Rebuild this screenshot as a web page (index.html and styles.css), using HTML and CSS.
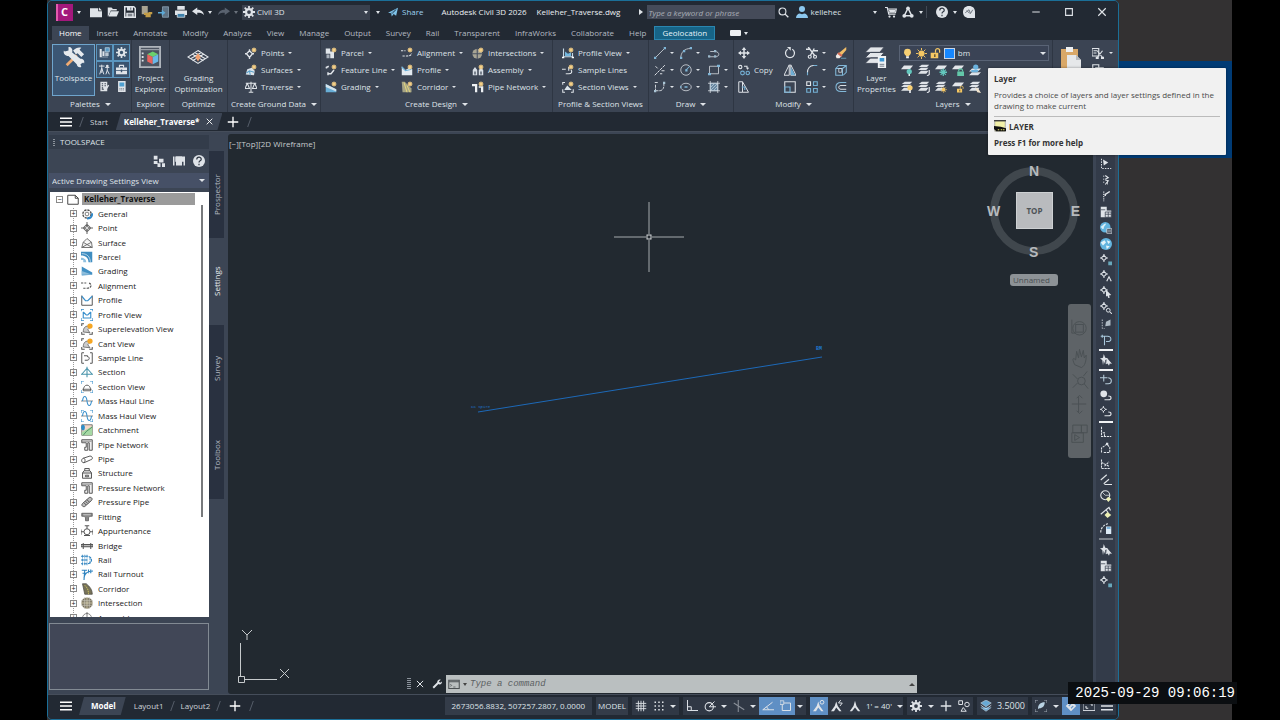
FILE: index.html
```html
<!DOCTYPE html>
<html lang="en">
<head>
<meta charset="utf-8">
<title>Autodesk Civil 3D 2026 - Kelleher_Traverse.dwg</title>
<link rel="stylesheet" href="styles.css">
</head>
<body>
<svg class="sprite" aria-hidden="true">
  <symbol id="star" viewBox="0 0 16 16"><path d="M8 0l2 4 4-2-2 4 4 2-4 2 2 4-4-2-2 4-2-4-4 2 2-4-4-2 4-2-2-4 4 2z" fill="#f4cf86"/></symbol>
  <symbol id="gear" viewBox="0 0 16 16"><circle cx="8" cy="8" r="4" fill="none" stroke="currentColor" stroke-width="3"/><path d="M8 0v3M8 13v3M0 8h3M13 8h3M2.300 2.300l2.200 2.200M11.500 11.500l2.200 2.200M2.300 13.700l2.200-2.200M11.500 4.500l2.200-2.200" stroke="currentColor" stroke-width="2.400"/></symbol>
  <symbol id="new" viewBox="0 0 16 16"><path d="M0 3h11v4h5v8H0z" fill="currentColor"/><path d="M12 2l4 4h-4z" fill="currentColor"/></symbol>
  <symbol id="open" viewBox="0 0 16 16"><path d="M1 14V2h5l2 2h5v2H5L2 13z" fill="currentColor"/><path d="M5 7h11l-3 7H2z" fill="currentColor"/></symbol>
  <symbol id="save" viewBox="0 0 16 16"><path d="M1 1h12l2 2v12H1z" fill="none" stroke="currentColor" stroke-width="2"/><path d="M4 1h8v5H4zM3 9h10v6H3z" fill="currentColor"/><path d="M5 11h6M5 13h6M9 2v3" stroke="#343b47"/></symbol>
  <symbol id="saveas" viewBox="0 0 16 16"><path d="M1 0h8v11H1z" fill="#a9a391"/><path d="M4 9h6v3H4zM10 8h5v3h-2v4H6v-3h4z" fill="#c39d47"/></symbol>
  <symbol id="import" viewBox="0 0 16 16"><path d="M6 1h8v14H6z" fill="#5e7284" stroke="#8fa7b8"/><path d="M0 8h5V5l5 4-5 4v-3H0z" fill="#5da9d6"/></symbol>
  <symbol id="print" viewBox="0 0 16 16"><path d="M3 0h10v5H3zM0 6h16v6H0z" fill="currentColor"/><path d="M3 10h10v5H3z" fill="#3d80ab" stroke="#e4e8ec"/></symbol>
  <symbol id="undo" viewBox="0 0 16 16"><path d="M0 7l7-5v3c5 0 8 2 9 7-3-3-5-3-9-3v3z" fill="currentColor"/></symbol>
  <symbol id="redo" viewBox="0 0 16 16"><path d="M16 7L9 2v3c-5 0-8 2-9 7 3-3 5-3 9-3v3z" fill="#59626f"/></symbol>
  <symbol id="plane" viewBox="0 0 16 16"><path d="M0 9L16 1l-3 13-4-3-3 4-1-5z" fill="#7fc3ea"/><path d="M5 10l8-6-6 7" fill="none" stroke="#28455c"/></symbol>
  <symbol id="search" viewBox="0 0 16 16"><circle cx="6.500" cy="6.500" r="5" fill="none" stroke="currentColor" stroke-width="1.600"/><path d="M10 10l5 5" stroke="currentColor" stroke-width="2"/></symbol>
  <symbol id="user" viewBox="0 0 16 16"><circle cx="8" cy="4" r="4" fill="#8cc7ee"/><path d="M0 16c0-4 3-6 5-6l3 1 3-1c2 0 5 2 5 6z" fill="#8cc7ee"/></symbol>
  <symbol id="cart" viewBox="0 0 16 16"><path d="M0 2h3l2 9h9M4 4h11l-1 5H5" fill="none" stroke="currentColor" stroke-width="1.600"/><path d="M5 5h9l-1 3H6z" fill="currentColor"/><circle cx="6" cy="14" r="1.500" fill="currentColor"/><circle cx="12" cy="14" r="1.500" fill="currentColor"/></symbol>
  <symbol id="apps" viewBox="0 0 16 16"><path d="M8 3L3 13h10z" fill="none" stroke="currentColor" stroke-width="2"/><circle cx="8" cy="3" r="2.500" fill="currentColor"/><circle cx="3" cy="13" r="2.500" fill="currentColor"/><circle cx="13" cy="13" r="2.500" fill="currentColor"/></symbol>
  <symbol id="help" viewBox="0 0 16 16"><circle cx="8" cy="8" r="8" fill="currentColor"/><path d="M5 6c0-4 6-4 6-.5C11 8 8 7.500 8 10M8 11.500v2" fill="none" stroke="#303844" stroke-width="1.600"/></symbol>
  <symbol id="chat" viewBox="0 0 16 16"><path d="M8 0c5 0 8 3 8 8v8H8c-5 0-8-3-8-8s3-8 8-8z" fill="currentColor"/><path d="M3 9l5-4 2 5 3-5M5 6l4 4" fill="none" stroke="#6c737d" stroke-width="1.300"/></symbol>
  <symbol id="close" viewBox="0 0 16 16"><path d="M3 3l10 10M13 3L3 13" stroke="currentColor" stroke-width="1.600"/></symbol>
  <symbol id="min" viewBox="0 0 16 16"><path d="M3 8h10" stroke="currentColor" stroke-width="1.500"/></symbol>
  <symbol id="max" viewBox="0 0 16 16"><path d="M3.500 3.500h9v9h-9z" fill="none" stroke="currentColor" stroke-width="1.500"/></symbol>
  <symbol id="plus" viewBox="0 0 16 16"><path d="M8 1v14M1 8h14" stroke="currentColor" stroke-width="1.800"/></symbol>
  <symbol id="menu" viewBox="0 0 16 16"><path d="M0 3h16M0 8h16M0 13h16" stroke="currentColor" stroke-width="1.700"/></symbol>

  <symbol id="tools" viewBox="0 0 24 24"><path d="M4 21L15 10" stroke="#f0ab72" stroke-width="3"/><path d="M11 5c3-3 6-4 9-3l-2 2 5 5-3 3-4-4-2 1z" fill="#e6eaee"/><path d="M6 1l0 4-4 1-1-1c-1 3 1 6 5 6l9 9c0 2 2 4 5 3l-1-3 3-2 1 1c1-3-1-5-4-5L10 7c1-4-1-6-4-6z" fill="#e6eaee"/></symbol>
  <symbol id="p-prospector" viewBox="0 0 16 16"><path d="M1 3h3v11h9v1H1zM5 6h3v7H5z" fill="#dfe4ea"/><path d="M9 1h6v6H9z" fill="#5a9bc6" stroke="#c7dceb"/><path d="M9 8h5v5H9z" fill="#b9c6d2"/></symbol>
  <symbol id="p-survey" viewBox="0 0 16 16"><path d="M0 3h8M4 1v5M4 6L1 15M4 6l3 9M4 6v7M9 5h6M12 6v3M12 9l-2 6M12 9l3 6" stroke="currentColor" stroke-width="1.400" fill="none"/><circle cx="12" cy="3" r="2" fill="currentColor"/></symbol>
  <symbol id="p-toolbox" viewBox="0 0 16 16"><path d="M0 5h16v4H0zM0 10h16v5H0z" fill="currentColor"/><path d="M5 5V2h6v3" fill="none" stroke="currentColor" stroke-width="1.600"/><path d="M7 8h2v4H7z" fill="#3a536e"/></symbol>
  <symbol id="p-sheet" viewBox="0 0 16 16"><path d="M2 1h10v14H2z" fill="currentColor"/><path d="M4 4h2M8 4h2M4 7h2M8 7h2M4 10h2M4 12h3" stroke="#3b4453" stroke-width="1.500"/><path d="M14 6l-5 8" stroke="currentColor" stroke-width="2"/></symbol>
  <symbol id="p-calc" viewBox="0 0 16 16"><path d="M3 0h11v16H3z" fill="currentColor"/><path d="M5 2h7v6H5z" fill="#4f9fd0"/><path d="M5 11h7M5 13h7" stroke="#59626f" stroke-dasharray="1.500 1"/></symbol>
  <symbol id="cube" viewBox="0 0 24 24"><path d="M1 1h22v22H1z" fill="#4b5360" stroke="#aeb4bb" stroke-width="2"/><path d="M2 4h20" stroke="#aeb4bb"/><path d="M4 7v2M4 11v2M4 15v2" stroke="#dde2e8" stroke-width="2"/><path d="M15 6l6 3-6 3-6-3z" fill="#6bd06c"/><path d="M9 9l6 3v8l-6-3z" fill="#e7625c"/><path d="M21 9l-6 3v8l6-3z" fill="#69b7e8"/></symbol>
  <symbol id="grade" viewBox="0 0 24 16"><path d="M12 1l11 7-11 7L1 8zM6 5l12 7M18 5L6 12M8.500 3L20 10M15.500 3L4 10" fill="none" stroke="#e2e6ea" stroke-width="1.200"/><path d="M12 4l3 4-3 5-3-5z" fill="#f0a070"/></symbol>

  <symbol id="points" viewBox="0 0 16 16"><path d="M6 5l4 4-4 5-4-5zM6 3v3M6 12v4M0 9h3M9 9h3" fill="none" stroke="currentColor" stroke-width="1.800"/><use href="#star" x="8" y="0" width="8" height="8"/></symbol>
  <symbol id="surfaces" viewBox="0 0 16 16"><path d="M1 14L3 7l6-2 4 4-1 6z" fill="#dbe3ea"/><path d="M2 12l4-3 6 2M6 9l1 6" stroke="#59a0ca" fill="none" stroke-width="1.400"/><use href="#star" x="8" y="0" width="8" height="8"/></symbol>
  <symbol id="traverse" viewBox="0 0 16 16"><path d="M1 3h14M8 1v14M5 15h6M3 3l-3 7h6L3 3M13 3l-3 7h6l-3-7" fill="none" stroke="currentColor" stroke-width="1.400"/></symbol>
  <symbol id="parcel" viewBox="0 0 16 16"><path d="M1 2h6v4h5v9H7V9H1z" fill="#e0e5ea"/><path d="M2 10h4v5H2z" fill="#a9b1bb"/><use href="#star" x="8" y="0" width="8" height="8"/></symbol>
  <symbol id="feature" viewBox="0 0 16 16"><path d="M1 5l4-2M2 4v2M4 13h4l4-5M4 11v4" fill="none" stroke="currentColor" stroke-width="2"/><use href="#star" x="8" y="0" width="8" height="8"/></symbol>
  <symbol id="grading" viewBox="0 0 16 16"><path d="M1 4l14 7v4H1z" fill="#68aed6"/><path d="M1 4v4l14 6v-3z" fill="#d4e3ec"/></symbol>
  <symbol id="grading-new" viewBox="0 0 16 16"><use href="#grading" width="16" height="16"/><use href="#star" x="8" y="0" width="8" height="8"/></symbol>
  <symbol id="align" viewBox="0 0 16 16"><path d="M0 4h7M3 11h5c7 0 7-7 1-7" fill="none" stroke="currentColor" stroke-width="1.600" stroke-dasharray="3 1.500"/></symbol>
  <symbol id="align-new" viewBox="0 0 16 16"><path d="M0 5h6M2 12h6c5 0 6-2 6-4" fill="none" stroke="currentColor" stroke-width="1.600" stroke-dasharray="3 1.500"/><use href="#star" x="8" y="0" width="8" height="8"/></symbol>
  <symbol id="profile-new" viewBox="0 0 16 16"><path d="M1 3l5 5 5-3 4 2v8H1z" fill="#e3eaf0"/><path d="M1 4l5 5 8-2" stroke="#68aed6" fill="none" stroke-width="1.500"/><use href="#star" x="8" y="0" width="8" height="8"/></symbol>
  <symbol id="corridor-new" viewBox="0 0 16 16"><path d="M1 1h4l9 9v5H2z" fill="#a6a485"/><path d="M4 2l4 13M8 6l4 9" stroke="#e4d87d" stroke-width="1.300"/><use href="#star" x="8" y="0" width="8" height="8"/></symbol>
  <symbol id="inter-new" viewBox="0 0 16 16"><circle cx="7" cy="9" r="6.500" fill="#a7a494"/><path d="M7 2v14M0 9h14" stroke="#4a5260" stroke-width="1.500"/><use href="#star" x="8" y="0" width="8" height="8"/></symbol>
  <symbol id="assembly" viewBox="0 0 16 16"><path d="M1 8l3-4 3 4v7H1zM9 8l3-3 3 3v7H9z" fill="#d9dfe6"/><path d="M3 10h2v4H3zM11 10h2v4h-2z" fill="#59626f"/><use href="#star" x="8" y="0" width="8" height="8"/></symbol>
  <symbol id="pipenet-new" viewBox="0 0 16 16"><path d="M0 4h7v11H4V7H0zM9 7h6v8h-3v-6H9z" fill="#eef1f4"/><use href="#star" x="8" y="0" width="8" height="8"/></symbol>
  <symbol id="profview-new" viewBox="0 0 16 16"><path d="M2 2v11h12V8" fill="none" stroke="#c7d9e6" stroke-width="1.500"/><path d="M4 6l4 3 4-2v5H4z" fill="#74b7dd"/><path d="M0 14h3M13 14h3" stroke="#fff" stroke-width="2"/><use href="#star" x="8" y="0" width="8" height="8"/></symbol>
  <symbol id="sample-new" viewBox="0 0 16 16"><path d="M0 7h5M5 13h4c4 0 5-3 3-5M9 4v5" fill="none" stroke="currentColor" stroke-width="1.500"/><use href="#star" x="8" y="0" width="8" height="8"/></symbol>
  <symbol id="section-new" viewBox="0 0 16 16"><path d="M1 5V2h3M1 11v4h3M12 15h3v-4" fill="none" stroke="currentColor" stroke-width="1.400"/><path d="M3 12l4-6 6 6z" fill="#dbe4eb"/><use href="#star" x="8" y="0" width="8" height="8"/></symbol>

  <symbol id="line" viewBox="0 0 16 16"><path d="M2 14L14 2" stroke="currentColor"/><path d="M0 13h3v3H0zM13 0h3v3h-3z" fill="#7fb5d6"/></symbol>
  <symbol id="arc" viewBox="0 0 16 16"><path d="M1 15C1 7 6 2 14 2" fill="none" stroke="currentColor"/><path d="M0 13h3v3H0zM4 4h3v3H4zM13 0h3v3h-3z" fill="#7fb5d6"/></symbol>
  <symbol id="pline" viewBox="0 0 16 16"><path d="M1 13h9c6 0 6-7-1-7H3" fill="none" stroke="currentColor"/><path d="M0 11h3v3H0zM8 4h3v3H8zM8 11h3v3H8z" fill="#9bb9cc"/></symbol>
  <symbol id="xline" viewBox="0 0 16 16"><path d="M1 15L15 1M2 3l3 3M10 9h5M8 13h3" fill="none" stroke="currentColor" stroke-width="1.300" stroke-dasharray="4 1"/></symbol>
  <symbol id="circle" viewBox="0 0 16 16"><circle cx="8" cy="8" r="7" fill="none" stroke="currentColor"/><path d="M8 8l5-5" stroke="#7fb5d6" stroke-width="1.400"/><path d="M7 7h3v3H7z" fill="#7fb5d6"/></symbol>
  <symbol id="rect" viewBox="0 0 16 16"><path d="M2 3h12v10H2z" fill="none" stroke="currentColor"/><path d="M0 12h4v3H0zM12 1h4v3h-4z" fill="#7fb5d6"/></symbol>
  <symbol id="poly" viewBox="0 0 16 16"><path d="M1 2h5M2 13h5c5 0 7-4 6-11M2 5v8" fill="none" stroke="currentColor" stroke-width="1.200" stroke-dasharray="4 1"/><path d="M0 12h3v3H0zM12 1h3v3h-3z" fill="#aac5d6"/></symbol>
  <symbol id="ellipse" viewBox="0 0 16 16"><ellipse cx="8" cy="8" rx="7" ry="5" fill="none" stroke="currentColor"/><path d="M6 7h4v2H6zM0 7h2v2H0z" fill="#7fb5d6"/></symbol>
  <symbol id="hatch" viewBox="0 0 16 16"><path d="M3 3h10v10H3z" fill="#6786a0" stroke="#9fbfd4"/><path d="M0 3h16M0 13h16M3 0v16M13 0v16" stroke="currentColor"/><path d="M4 8l4-4M4 12l8-8M8 12l4-4" stroke="#b9cddb"/></symbol>

  <symbol id="move" viewBox="0 0 16 16"><path d="M8 2v12M2 8h12" stroke="currentColor" stroke-width="2"/><path d="M8 0l3 4H5zM8 16l-3-4h6zM0 8l4-3v6zM16 8l-4 3V5z" fill="currentColor"/></symbol>
  <symbol id="copy" viewBox="0 0 16 16"><g fill="none" stroke-width="1.500"><circle cx="3" cy="4" r="2.200" stroke="currentColor"/><path d="M8 3h4v3M12 7l2-2" stroke="currentColor"/><circle cx="6" cy="12" r="2.500" stroke="#74b0d4"/><circle cx="13" cy="12" r="2.300" stroke="#74b0d4"/></g></symbol>
  <symbol id="stretch" viewBox="0 0 16 16"><path d="M1 1h5v14H1zM6 1l8 14H6" fill="none" stroke="currentColor" stroke-width="1.300"/><path d="M5 8h4v4" fill="none" stroke="#74b0d4" stroke-width="1.500"/></symbol>
  <symbol id="rotate" viewBox="0 0 16 16"><path d="M11 3a6 6 0 1 1-6 0" fill="none" stroke="currentColor" stroke-width="1.700"/><path d="M4 0h5v5z" fill="currentColor"/></symbol>
  <symbol id="mirror" viewBox="0 0 16 16"><path d="M7 1v14H0zM9 1v14h7z" fill="none" stroke="currentColor" stroke-width="1.300"/><path d="M9 4v11h6z" fill="#6faed4"/></symbol>
  <symbol id="scale" viewBox="0 0 16 16"><path d="M1 1h14v14H1z" fill="none" stroke="currentColor" stroke-width="1.400"/><path d="M1 8h7v7H1z" fill="none" stroke="#74b0d4" stroke-width="1.500"/></symbol>
  <symbol id="trim" viewBox="0 0 16 16"><path d="M0 3h6M3 0l9 12M11 2L6 11M10 5h6" stroke="currentColor" stroke-width="1.800"/><circle cx="5" cy="13" r="2" fill="none" stroke="currentColor" stroke-width="1.600"/><circle cx="12" cy="13" r="2" fill="none" stroke="currentColor" stroke-width="1.600"/></symbol>
  <symbol id="fillet" viewBox="0 0 16 16"><path d="M2 15V10M9 2h6" stroke="#74b0d4" stroke-width="1.500"/><path d="M2 11c0-5 3-9 8-9" fill="none" stroke="currentColor" stroke-width="1.400"/></symbol>
  <symbol id="array" viewBox="0 0 16 16"><g fill="none" stroke-width="1.500"><path d="M1 1h5v5H1z" stroke="currentColor"/><path d="M10 1h5v5h-5zM1 10h5v5H1zM10 10h5v5h-5z" stroke="#74b0d4"/></g></symbol>
  <symbol id="erase" viewBox="0 0 16 16"><path d="M15 0v4L8 12l-4-3z" fill="#f1bd67"/><path d="M4 8l5 4-3 3H2l-1-3z" fill="#f0ebe8"/><path d="M5 7l5 4-2 2-5-4z" fill="#d76d57"/><path d="M8 15h7" stroke="#74b0d4"/></symbol>
  <symbol id="explode" viewBox="0 0 16 16"><path d="M1 6h9v9H1zM1 6l4-4h10v9l-4 4M10 6l5-4" fill="none" stroke="#82b8d8" stroke-width="1.400"/><path d="M5 6h4v5H5z" fill="none" stroke="currentColor"/></symbol>
  <symbol id="offset" viewBox="0 0 16 16"><path d="M15 2H8C-1 2-1 14 8 14h7" fill="none" stroke="#82b8d8" stroke-width="1.400"/><path d="M15 6H8c-4 0-4 5 0 5h7" fill="none" stroke="currentColor" stroke-width="1.300"/></symbol>

  <symbol id="layerprops" viewBox="0 0 24 24"><path d="M6 1h15l-5 6H0zM6 7h15l-5 6H0zM6 13h15l-5 6H0z" fill="#e2e5e9" stroke="#3b4453"/><path d="M14 11h9v13h-9z" fill="#eef1f4"/><path d="M16 13h5v4h-5z" fill="#3b96d3"/><path d="M16 20h5M16 22h5" stroke="#697480"/></symbol>
  <symbol id="bulb" viewBox="0 0 16 16"><circle cx="8" cy="6" r="5" fill="#f7cf73"/><path d="M5 9h6l-1 3H6z" fill="#f7cf73"/><path d="M6 12h4v3H6z" fill="#f2f2f2"/></symbol>
  <symbol id="sun" viewBox="0 0 16 16"><circle cx="8" cy="8" r="4.500" fill="#f5c763"/><path d="M8 0v3M8 13v3M0 8h3M13 8h3M2.300 2.300l2 2M11.500 11.500l2.200 2.200M2.300 13.700l2-2M11.500 4.500l2.200-2.200" stroke="#f5c763" stroke-width="1.400"/></symbol>
  <symbol id="unlock" viewBox="0 0 16 16"><path d="M1 7h11v8H1z" fill="#f5c763"/><path d="M8 7V4c0-4 6-4 6 0v3" fill="none" stroke="#f5c763" stroke-width="1.800"/><path d="M6 9h2v4H6z" fill="#594e35"/></symbol>
  <symbol id="sheet1" viewBox="0 0 16 16"><path d="M4 2h12l-4 5H0z" fill="#e3e6ea"/></symbol>
  <symbol id="sheet3" viewBox="0 0 16 16"><path d="M5 1h10l-3 3H1zM4 5h10l-3 3H0zM4 9h10l-3 4H0z" fill="#dfe3e8"/></symbol>
  <symbol id="l-off" viewBox="0 0 16 16"><use href="#sheet1" width="16" height="16"/><circle cx="11" cy="10" r="3.500" fill="#63c7bd"/><path d="M10 13h2v3h-2z" fill="#dff5f2"/></symbol>
  <symbol id="l-iso" viewBox="0 0 16 16"><use href="#sheet3" width="16" height="16"/><path d="M15 8v6l-3 2" fill="none" stroke="#dfe3e8" stroke-width="1.600"/></symbol>
  <symbol id="l-frz" viewBox="0 0 16 16"><use href="#sheet1" width="16" height="16"/><path d="M11 6v10M6 11h10M7.500 7.500l7 7M14.500 7.500l-7 7" stroke="#63c7bd" stroke-width="1.700"/></symbol>
  <symbol id="l-lock" viewBox="0 0 16 16"><use href="#sheet1" width="16" height="16"/><path d="M7 10h9v6H7z" fill="#63c7a9"/><path d="M9 10V8c0-2 5-2 5 0v2" fill="none" stroke="#63c7a9" stroke-width="1.600"/></symbol>
  <symbol id="l-cur" viewBox="0 0 16 16"><path d="M4 6h12l-4 4H0zM4 11h12l-4 4H0z" fill="#dfe3e8"/><circle cx="9" cy="4" r="3.500" fill="#6bb2dd"/><path d="M3 8h10l-2 3H3z" fill="#6bb2dd"/></symbol>
  <symbol id="l-on" viewBox="0 0 16 16"><use href="#sheet3" width="16" height="16"/><circle cx="12" cy="9" r="3.500" fill="#f7cf73"/><path d="M11 12h2v4h-2z" fill="#fff"/></symbol>
  <symbol id="l-thaw" viewBox="0 0 16 16"><use href="#sheet3" width="16" height="16"/><use href="#sun" x="7" y="7" width="9" height="9"/></symbol>
  <symbol id="l-unlock" viewBox="0 0 16 16"><use href="#sheet1" width="16" height="16"/><use href="#unlock" x="6" y="6" width="10" height="10"/></symbol>
  <symbol id="l-match" viewBox="0 0 16 16"><use href="#sheet3" width="16" height="16"/><path d="M8 8l5 3 3 5-5-1z" fill="#f0e3cd"/></symbol>
  <symbol id="paste" viewBox="0 0 20 24"><path d="M0 3h17v21H0z" fill="#d9a868"/><path d="M5 1h7v5H5z" fill="#eef0f2"/><path d="M6 9h9l5 5v10H6z" fill="#e6e8ea"/><path d="M15 9v5h5" fill="#b9bdc2"/></symbol>
  <symbol id="cut" viewBox="0 0 16 16"><path d="M0 2h9v10H0z" fill="none" stroke="currentColor" stroke-width="1.500"/><path d="M2 5h5M2 8h4M7 5l7 9M14 5L7 14" stroke="currentColor" stroke-width="1.600"/><path d="M5 13h4v3H5zM12 13h4v3h-4z" fill="currentColor"/></symbol>
  <symbol id="copyclip" viewBox="0 0 16 16"><path d="M1 1h8v9H1zM5 5h10v10H5z" fill="#3b4453" stroke="currentColor" stroke-width="1.500"/></symbol>
  <symbol id="layercmd" viewBox="0 0 16 16"><path d="M1 1h14v14H1z" fill="#f3f1a8" stroke="#999"/><path d="M0 1h16" stroke="#222" stroke-width="1.500"/><path d="M0 8l9 1 7 2v4H3l-3-3z" fill="#111"/><path d="M5 13h2M9 13h2M12 13h2" stroke="#e9e36a" stroke-width="1.500"/></symbol>

  <symbol id="ts-tree" viewBox="0 0 16 16"><path d="M1 1h5v5H1zM1 8h5v4H1zM8 5h6v5H8zM6 11h4v5H6zM12 11h4v5h-4z" fill="currentColor"/></symbol>
  <symbol id="ts-pane" viewBox="0 0 16 16"><path d="M0 2h2v12H0zM3 2h13v12h-2V9H3z" fill="currentColor"/><path d="M4 2h8v12H4z" fill="currentColor"/></symbol>
  <symbol id="t-doc" viewBox="0 0 16 16"><path d="M1 3h10l4 4v8H1zM11 3v4h4" fill="#fff" stroke="#444" stroke-width="1.300"/></symbol>
  <symbol id="t-general" viewBox="0 0 16 16"><circle cx="8" cy="8" r="5.500" fill="none" stroke="#555" stroke-width="2" stroke-dasharray="3 1.300"/><circle cx="8" cy="8" r="2.500" fill="none" stroke="#555"/><path d="M8 14c5 0 7-3 7-7" fill="none" stroke="#2e87c8" stroke-width="2.500"/></symbol>
  <symbol id="t-point" viewBox="0 0 16 16"><path d="M8 3l5 5-5 5-5-5zM8 0v16M0 8h16" fill="none" stroke="#666" stroke-width="1.400"/><circle cx="8" cy="8" r="2" fill="#fff" stroke="#666"/></symbol>
  <symbol id="t-surface" viewBox="0 0 16 16"><path d="M1 14L3 7l5-5 6 5 1 7zM3 7l5 3 6-3M8 10l-7 4M8 10l7 4" fill="#f4f4f4" stroke="#666" stroke-width="1.200"/></symbol>
  <symbol id="t-parcel" viewBox="0 0 16 16"><path d="M0 1h15v14h-5c0-6-4-9-10-9z" fill="#3f8dc0"/><path d="M0 9c4 0 7 2 7 6H3v-3H0z" fill="#8fc0df"/><path d="M1 3.500c7 0 11 4 11.500 11" fill="none" stroke="#d8eaf5"/></symbol>
  <symbol id="t-grading" viewBox="0 0 16 16"><path d="M1 2l14 8v3L1 14z" fill="#4290c4"/><path d="M1 8l14 5H1z" fill="#8ebddb"/></symbol>
  <symbol id="t-profile" viewBox="0 0 16 16"><path d="M1 2v13h14V2" fill="none" stroke="#555" stroke-width="1.300"/><path d="M1 3l5 6h3l6-6" fill="none" stroke="#3a90cc" stroke-width="1.600"/></symbol>
  <symbol id="t-profview" viewBox="0 0 16 16"><path d="M3 4v8h10V4M3 4l4 4h2l4-4" fill="none" stroke="#3a90cc" stroke-width="1.500"/><path d="M0 3V0h4M12 0h4v3M0 12v4h4M12 16h4v-4" fill="none" stroke="#3a90cc" stroke-width="1.700"/></symbol>
  <symbol id="t-super" viewBox="0 0 16 16"><path d="M1 4V1h3M1 12v3h4M11 15h4v-3" fill="none" stroke="#555" stroke-width="1.400"/><path d="M3 12c0-5 2-8 7-8l1 3-2 2 3 4z" fill="#ccc" stroke="#555"/><circle cx="12" cy="4" r="3.500" fill="#f5a623"/></symbol>
  <symbol id="t-sample" viewBox="0 0 16 16"><path d="M4 1H1v14h3M12 1h3v14h-3M4 5h5M5 11h3c4 0 4-5 0-5" fill="none" stroke="#555" stroke-width="1.300"/></symbol>
  <symbol id="t-section" viewBox="0 0 16 16"><path d="M8 1v14M0 11h16M8 3L1 11M8 3l7 8" fill="none" stroke="#4692a9" stroke-width="1.400"/></symbol>
  <symbol id="t-secview" viewBox="0 0 16 16"><path d="M0 4V0h4M12 0h4v4M0 12v4h4M12 16h4v-4" fill="none" stroke="#3a90cc" stroke-width="1.500"/><path d="M3 13c0-10 10-10 10 0zM2 11h12" fill="none" stroke="#555" stroke-width="1.200"/></symbol>
  <symbol id="t-mass" viewBox="0 0 16 16"><path d="M0 8h16" stroke="#666"/><path d="M2 8c1-8 5-8 6 0s5 8 6 0" fill="none" stroke="#3a90cc" stroke-width="1.500"/></symbol>
  <symbol id="t-massview" viewBox="0 0 16 16"><use href="#t-mass" width="16" height="16"/><path d="M0 4V0h4M12 0h4v4M0 12v4h4M12 16h4v-4" fill="none" stroke="#3a90cc" stroke-width="1.500"/></symbol>
  <symbol id="t-catch" viewBox="0 0 16 16"><path d="M1 1h14v14H1z" fill="#f4d7c8" stroke="#555"/><path d="M1 11L15 3v12H1z" fill="#a6d9a4"/><path d="M3 15l4-5 8-6" fill="none" stroke="#3b7b55"/><path d="M0 4c2-5 6-3 5 2s-5 2-5-2z" fill="#2d8ec9"/></symbol>
  <symbol id="t-net" viewBox="0 0 16 16"><path d="M1 1h14v14h-4V5H9v10H5v-4h2V5H1z" fill="#eee" stroke="#555" stroke-width="1.300"/><path d="M1 3h13" stroke="#777"/></symbol>
  <symbol id="t-pipe" viewBox="0 0 16 16"><path d="M3 7l9-3c4 0 4 5 1 5l-9 4c-4 0-4-5-1-6zM3 7c3 0 3 4 1 6" fill="none" stroke="#555" stroke-width="1.300"/></symbol>
  <symbol id="t-struct" viewBox="0 0 16 16"><path d="M4 5h8l2 3v7H2V8zM5 5V2h6v3M2 8h12M6 11h4v2H6z" fill="#eee" stroke="#555" stroke-width="1.300"/></symbol>
  <symbol id="t-ppipe" viewBox="0 0 16 16"><path d="M2 10l9-8c3-1 5 2 3 4l-9 8c-3 1-5-2-3-4zM4 9l3 3M6 7l3 3M8 5l3 3" fill="#bbb" stroke="#555" stroke-width="1.300"/></symbol>
  <symbol id="t-fit" viewBox="0 0 16 16"><path d="M1 3h14v4h-3l-2 2v4H6V9L4 7H1z" fill="#888" stroke="#555"/><path d="M3 5h10" stroke="#ddd"/></symbol>
  <symbol id="t-app" viewBox="0 0 16 16"><circle cx="8" cy="9" r="4" fill="none" stroke="#555" stroke-width="1.300"/><path d="M8 5V1M5 1h6M0 6v7M16 6v7M0 9h4M12 9h4M4 14h8" stroke="#555" stroke-width="1.400"/></symbol>
  <symbol id="t-bridge" viewBox="0 0 16 16"><path d="M0 6h16v3H0zM3 4v8M13 4v8" fill="#bbb" stroke="#555" stroke-width="1.400"/></symbol>
  <symbol id="t-rail" viewBox="0 0 16 16"><path d="M0 3h8c8 0 8 10 0 10H0M0 8h8" fill="none" stroke="#2e83bf" stroke-width="1.500" stroke-dasharray="4 1"/><path d="M2 1v14M5 1v14M8 1v14M12 4v9" stroke="#2e83bf" stroke-dasharray="4 1"/></symbol>
  <symbol id="t-turn" viewBox="0 0 16 16"><path d="M4 16L5 3M4 13c1-6 4-9 12-9M1 3h7M2 7h5M10 2v5M13 2v5" fill="none" stroke="#2e83bf" stroke-width="1.500"/></symbol>
  <symbol id="t-corr" viewBox="0 0 16 16"><path d="M2 1h5c5 4 8 8 8 14H5z" fill="#777258" stroke="#4f4e47"/><path d="M5 3c4 4 5 7 5 12" stroke="#e4d860" stroke-dasharray="2 1" fill="none"/></symbol>
  <symbol id="t-inter" viewBox="0 0 16 16"><circle cx="8" cy="8" r="7.500" fill="#77705c"/><path d="M8 0v16M0 8h16" stroke="#e9e3c6"/><path d="M5 0v16M11 0v16M0 5h16M0 11h16" stroke="#c8c6bc"/></symbol>
  <symbol id="t-asm" viewBox="0 0 16 16"><circle cx="8" cy="8" r="6" fill="none" stroke="#666"/><path d="M8 0v16" stroke="#555"/></symbol>

  <symbol id="r-tri" viewBox="0 0 16 16"><path d="M2 1v13h13" fill="none" stroke="currentColor" stroke-dasharray="2 1.500" stroke-width="1.300"/><path d="M4 2l7 4-6 4z" fill="currentColor"/></symbol>
  <symbol id="r-person" viewBox="0 0 16 16"><path d="M5 2v2M5 6v2M5 10v2M10 9v5" stroke="currentColor"/><path d="M7 2l4 3-4 2M7 8l4 1-4 5" fill="none" stroke="currentColor" stroke-width="1.500"/></symbol>
  <symbol id="r-flag" viewBox="0 0 16 16"><path d="M5 2v13" stroke="currentColor" stroke-dasharray="1.500 1.500" stroke-width="1.500"/><path d="M13 2L7 6v2" fill="none" stroke="currentColor" stroke-width="2"/></symbol>
  <symbol id="r-table" viewBox="0 0 16 16"><path d="M1 1h8v5h6v9H1z" fill="currentColor"/><path d="M7 8h8v7H7zM7 11h8M11 8v7M1 5h6" fill="none" stroke="#3b4453"/></symbol>
  <symbol id="r-globe" viewBox="0 0 16 16"><circle cx="7" cy="7" r="7" fill="#63b4df"/><path d="M1 6c3 0 3-4 7-4 0 3-3 3-3 6S2 9 1 6z" fill="#d7eef7"/><path d="M9 9h7v6H9z" fill="#3b4453" stroke="#dfe4ea"/><path d="M10 12h5" stroke="#dfe4ea"/></symbol>
  <symbol id="r-globe2" viewBox="0 0 16 16"><circle cx="8" cy="8" r="8" fill="#63b4df"/><path d="M1 6l5-3 2 3-4 4zM9 3l5 2-3 3zM8 10l5 1-4 4z" fill="#e1f3fa"/></symbol>
  <symbol id="r-node" viewBox="0 0 16 16"><path d="M6 2l4 4-4 4-4-4zM6 0v3M6 9v3M0 6h3M9 6h3" fill="none" stroke="currentColor" stroke-width="1.700"/></symbol>
  <symbol id="r-ndot" viewBox="0 0 16 16"><use href="#r-node" width="14" height="14"/><path d="M11 10h5v5h-5z" fill="#68a7ba"/></symbol>
  <symbol id="r-ntext" viewBox="0 0 16 16"><use href="#r-node" width="14" height="14"/><path d="M9 15l3-6 3 6" fill="none" stroke="currentColor" stroke-width="1.500"/></symbol>
  <symbol id="r-narrow" viewBox="0 0 16 16"><use href="#r-node" width="14" height="14"/><path d="M8 5l7 7-3 .5 1 3-2 .5-1-3-2 1z" fill="currentColor"/></symbol>
  <symbol id="r-nzoom" viewBox="0 0 16 16"><use href="#r-node" width="14" height="14"/><circle cx="11" cy="11" r="2.500" fill="none" stroke="currentColor" stroke-width="1.300"/><path d="M13 13l3 3" stroke="currentColor" stroke-width="1.400"/></symbol>
  <symbol id="r-edit" viewBox="0 0 16 16"><path d="M3 2v12h3" stroke="currentColor" stroke-dasharray="2 1.500" fill="none"/><path d="M14 2v8L7 11l1-6z" fill="#aeb9c3"/></symbol>
  <symbol id="r-turn" viewBox="0 0 16 16"><path d="M1 3h9c6 0 6 7 0 7H8M6 3v12M3 1v4" fill="none" stroke="#a9c8dc" stroke-width="1.400"/></symbol>
  <symbol id="r-star" viewBox="0 0 16 16"><path d="M5 0l2 5 4 1-4 2v6l-2-5-1 6-1-7-3-2 4-1zM9 5l7 8-3-.5-1 3-2-3-2 1z" fill="currentColor"/></symbol>
  <symbol id="r-nturn" viewBox="0 0 16 16"><use href="#r-node" width="12" height="12"/><path d="M6 13h5c5 0 5-5 0-5" fill="none" stroke="currentColor" stroke-width="1.400"/></symbol>
  <symbol id="r-curve" viewBox="0 0 16 16"><path d="M0 5h10M5 1v9M7 13h4c5 0 6-7 0-8" fill="none" stroke="#b5cbd9" stroke-width="1.400"/></symbol>
  <symbol id="r-blob" viewBox="0 0 16 16"><circle cx="5" cy="5" r="4.500" fill="currentColor"/><path d="M6 13h5c5 0 5-5 0-5" fill="none" stroke="currentColor" stroke-width="1.400"/></symbol>
  <symbol id="r-l1" viewBox="0 0 16 16"><path d="M2 1v13h13M6 14V9H2" fill="none" stroke="currentColor" stroke-dasharray="3 1" stroke-width="1.400"/></symbol>
  <symbol id="r-l2" viewBox="0 0 16 16"><path d="M2 14V8l7-5 4 4v7H4" fill="none" stroke="currentColor" stroke-dasharray="3 1" stroke-width="1.400"/><path d="M8 1h3v3H8z" fill="currentColor"/></symbol>
  <symbol id="r-l3" viewBox="0 0 16 16"><path d="M2 2v12h12M2 6l10 5M6 11l6-6" fill="none" stroke="currentColor" stroke-dasharray="3 1" stroke-width="1.400"/></symbol>
  <symbol id="r-l4" viewBox="0 0 16 16"><path d="M1 8l8-7M5 13l7-6M6 14h10" fill="none" stroke="currentColor" stroke-width="1.500"/></symbol>
  <symbol id="r-cir" viewBox="0 0 16 16"><circle cx="7" cy="7" r="6" fill="none" stroke="currentColor" stroke-width="1.500"/><path d="M7 7L3 3M7 7h6" stroke="currentColor"/><path d="M11 9l4 3-4 4-3-4z" fill="#ecefb4"/></symbol>
  <symbol id="r-dia" viewBox="0 0 16 16"><path d="M1 11l7-6 3 4M8 5l4-3 2 4" fill="none" stroke="currentColor" stroke-width="1.600"/><path d="M10 8l5 4-5 4-4-4z" fill="#ecefb4"/></symbol>
  <symbol id="r-calc" viewBox="0 0 16 16"><path d="M1 14C1 8 5 3 12 2" fill="none" stroke="currentColor" stroke-dasharray="3 1.500" stroke-width="1.500"/><path d="M8 6h7v10H8z" fill="#dceaf6"/><path d="M9 8h5" stroke="#5d9fd2" stroke-width="2"/></symbol>

  <symbol id="s-grid" viewBox="0 0 16 16"><path d="M4.500 1v14M11.500 1v14M1 4.500h14M1 11.500h14M8 1v14M1 8h14" stroke="currentColor" stroke-width="1.200"/></symbol>
  <symbol id="s-snap" viewBox="0 0 16 16"><path d="M2 3h13M2 8h13M2 13h13" stroke="currentColor" stroke-width="2" stroke-dasharray="2 3"/></symbol>
  <symbol id="s-ortho" viewBox="0 0 16 16"><path d="M2 0v14h14M2 9h5v5" fill="none" stroke="currentColor" stroke-width="1.300"/></symbol>
  <symbol id="s-polar" viewBox="0 0 16 16"><circle cx="7" cy="9" r="5.500" fill="none" stroke="currentColor" stroke-width="1.400"/><path d="M7 9h9M7 9l7-7" stroke="currentColor" stroke-width="1.300"/></symbol>
  <symbol id="s-iso" viewBox="0 0 16 16"><path d="M7 0v16M1 4l14 9" stroke="#8a9099" stroke-width="1.400"/></symbol>
  <symbol id="s-track" viewBox="0 0 16 16"><path d="M1 13h15M1 13L14 3M6 9l3 4" fill="none" stroke="currentColor" stroke-width="1.300"/></symbol>
  <symbol id="s-osnap" viewBox="0 0 16 16"><path d="M3 4h11v10H3z" fill="none" stroke="currentColor" stroke-width="1.300"/><path d="M0 1h5v5H0z" fill="#6b98c8" stroke="currentColor"/></symbol>
  <symbol id="s-anno" viewBox="0 0 16 16"><path d="M8 1l2 7 5 7H12L8 10l-4 5H1l5-7z" fill="currentColor"/></symbol>
  <symbol id="s-anno2" viewBox="0 0 16 16"><path d="M7 2l2 6 5 7H11L7 10l-3 5H0l5-7z" fill="currentColor"/><circle cx="12" cy="3" r="2.500" fill="none" stroke="currentColor" stroke-width="1.300"/></symbol>
  <symbol id="s-anno3" viewBox="0 0 16 16"><path d="M7 2l2 6 5 7H11L7 10l-3 5H0l5-7z" fill="currentColor"/><path d="M13 0l-3 4h5l-3 4" fill="none" stroke="currentColor" stroke-width="1.300"/></symbol>
  <symbol id="s-shapes" viewBox="0 0 16 16"><path d="M1 1h5v5H1zM7 10l4 5H4z" fill="none" stroke="currentColor" stroke-width="1.300"/><circle cx="12" cy="6" r="3" fill="none" stroke="currentColor" stroke-width="1.300"/></symbol>
  <symbol id="s-layers" viewBox="0 0 16 16"><path d="M1 10l7 5 7-5M1 4l7 5 7-5-7-4z" fill="#68a9d5" stroke="#aebbc7"/><path d="M1 7l7 5 7-5" fill="none" stroke="#dfe6ed"/></symbol>
  <symbol id="s-leaf" viewBox="0 0 16 16"><path d="M0 4V0h4M12 0h4v4M0 12v4h4M12 16h4v-4" fill="none" stroke="#aab2bc" stroke-width="1.200"/><path d="M4 12c0-6 3-9 9-9 0 5-3 8-7 8z" fill="#b9d2e2"/></symbol>
  <symbol id="s-dia" viewBox="0 0 16 16"><path d="M8 1l7 7-7 7-7-7z" fill="currentColor"/><path d="M5 8l3-3M8 11l3-3" stroke="#6796c8" stroke-width="1.500"/></symbol>
  <symbol id="s-full" viewBox="0 0 16 16"><path d="M0 2h16v12H0z" fill="none" stroke="currentColor" stroke-width="1.200"/><path d="M4 11V8M4 11h3M12 5H9M12 5v3" stroke="currentColor" stroke-width="1.500"/></symbol>
  <symbol id="wrench" viewBox="0 0 16 16"><path d="M2 14l8-8" stroke="currentColor" stroke-width="3"/><path d="M9 7c-2-4 2-7 5-6l-3 3 2 2 3-2c0 4-3 6-6 4z" fill="currentColor"/></symbol>
  <symbol id="prompt" viewBox="0 0 16 16"><path d="M1 3h14v11H1zM1 5h14" fill="none" stroke="#4b5053" stroke-width="1.400"/><path d="M3 8l2 2-2 1M7 12h3" fill="none" stroke="#4b5053"/></symbol>
</svg>

<div class="desktop">
  <div class="backdrop"></div>
  <main class="app">
    <header class="titlebar">
      <button class="logo" aria-label="Application menu">C</button><i class="caret"></i>
      <div class="quick">
        <button aria-label="New"><svg><use href="#new"/></svg></button>
        <button aria-label="Open"><svg><use href="#open"/></svg></button>
        <button aria-label="Save"><svg><use href="#save"/></svg></button>
        <button aria-label="Save as"><svg><use href="#saveas"/></svg></button>
        <button aria-label="Import"><svg><use href="#import"/></svg></button>
        <button aria-label="Plot"><svg><use href="#print"/></svg></button>
        <button class="split" aria-label="Undo"><svg><use href="#undo"/></svg><i class="caret"></i></button>
        <button class="split" aria-label="Redo"><svg><use href="#redo"/></svg><i class="caret dim"></i></button>
      </div>
      <label class="workspace"><svg><use href="#gear"/></svg><select aria-label="Workspace"><option>Civil 3D</option></select><i class="caret"></i></label>
      <i class="caret more"></i>
      <button class="share"><svg><use href="#plane"/></svg>Share</button>
      <h1 class="title"><span>Autodesk Civil 3D 2026</span><span>Kelleher_Traverse.dwg</span></h1>
      <i class="caret right"></i>
      <input class="search" type="search" aria-label="Search help" placeholder="Type a keyword or phrase">
      <button class="find" aria-label="Search"><svg><use href="#search"/></svg></button>
      <button class="account"><svg><use href="#user"/></svg>kellehec<i class="caret"></i></button>
      <div class="services">
        <button aria-label="Store"><svg><use href="#cart"/></svg></button>
        <button class="split" aria-label="Apps"><svg><use href="#apps"/></svg><i class="caret"></i></button>
        <button class="split helpbtn" aria-label="Help"><svg><use href="#help"/></svg><i class="caret"></i></button>
        <button aria-label="Feedback"><svg><use href="#chat"/></svg></button>
      </div>
      <div class="wincontrols">
        <button aria-label="Minimize"><svg><use href="#min"/></svg></button>
        <button aria-label="Maximize"><svg><use href="#max"/></svg></button>
        <button aria-label="Close"><svg><use href="#close"/></svg></button>
      </div>
    </header>

    <nav class="ribbon-tabs" aria-label="Ribbon tabs">
      <button class="active">Home</button><button>Insert</button><button>Annotate</button><button>Modify</button><button>Analyze</button><button>View</button><button>Manage</button><button>Output</button><button>Survey</button><button>Rail</button><button>Transparent</button><button>InfraWorks</button><button>Collaborate</button><button>Help</button><button class="geo">Geolocation</button>
      <button class="collapse" aria-label="Minimize ribbon"><span class="pill"></span><i class="caret"></i></button>
    </nav>

    <section class="ribbon">
      <div class="panel">
        <div class="panel-body palettes">
          <button class="big on"><svg><use href="#tools"/></svg>Toolspace</button>
          <div class="mini">
            <button class="on" aria-label="Prospector"><svg><use href="#p-prospector"/></svg></button>
            <button class="on" aria-label="Settings"><svg><use href="#gear"/></svg></button>
            <button class="on" aria-label="Survey"><svg><use href="#p-survey"/></svg></button>
            <button class="on" aria-label="Toolbox"><svg><use href="#p-toolbox"/></svg></button>
            <button aria-label="Properties"><svg><use href="#p-sheet"/></svg></button>
            <button aria-label="Calculator"><svg><use href="#p-calc"/></svg></button>
          </div>
        </div>
        <h2>Palettes<i class="caret"></i></h2>
      </div>
      <div class="panel">
        <div class="panel-body center"><button class="big"><svg><use href="#cube"/></svg>Project<br>Explorer</button></div>
        <h2>Explore</h2>
      </div>
      <div class="panel">
        <div class="panel-body center"><button class="big"><svg><use href="#grade"/></svg>Grading<br>Optimization</button></div>
        <h2>Optimize</h2>
      </div>
      <div class="panel">
        <div class="panel-body cmds ground">
          <button><svg><use href="#points"/></svg>Points<i class="caret"></i></button>
          <button><svg><use href="#surfaces"/></svg>Surfaces<i class="caret"></i></button>
          <button><svg><use href="#traverse"/></svg>Traverse<i class="caret"></i></button>
        </div>
        <h2>Create Ground Data<i class="caret"></i></h2>
      </div>
      <div class="panel">
        <div class="panel-body cmds design">
          <button><svg><use href="#parcel"/></svg>Parcel<i class="caret"></i></button>
          <button><svg><use href="#feature"/></svg>Feature Line<i class="caret"></i></button>
          <button><svg><use href="#grading-new"/></svg>Grading<i class="caret"></i></button>
          <button><svg><use href="#align-new"/></svg>Alignment<i class="caret"></i></button>
          <button><svg><use href="#profile-new"/></svg>Profile<i class="caret"></i></button>
          <button><svg><use href="#corridor-new"/></svg>Corridor<i class="caret"></i></button>
          <button><svg><use href="#inter-new"/></svg>Intersections<i class="caret"></i></button>
          <button><svg><use href="#assembly"/></svg>Assembly<i class="caret"></i></button>
          <button><svg><use href="#pipenet-new"/></svg>Pipe Network<i class="caret"></i></button>
        </div>
        <h2>Create Design<i class="caret"></i></h2>
      </div>
      <div class="panel">
        <div class="panel-body cmds views">
          <button><svg><use href="#profview-new"/></svg>Profile View<i class="caret"></i></button>
          <button><svg><use href="#sample-new"/></svg>Sample Lines</button>
          <button><svg><use href="#section-new"/></svg>Section Views<i class="caret"></i></button>
        </div>
        <h2>Profile &amp; Section Views</h2>
      </div>
      <div class="panel">
        <div class="panel-body cmds draw">
          <button aria-label="Line"><svg><use href="#line"/></svg><i class="caret"></i></button>
          <button aria-label="Construction line"><svg><use href="#xline"/></svg><i class="caret"></i></button>
          <button aria-label="Polyline"><svg><use href="#poly"/></svg><i class="caret"></i></button>
          <button aria-label="Arc"><svg><use href="#arc"/></svg><i class="caret"></i></button>
          <button aria-label="Circle"><svg><use href="#circle"/></svg><i class="caret"></i></button>
          <button aria-label="Ellipse"><svg><use href="#ellipse"/></svg><i class="caret"></i></button>
          <button aria-label="3D polyline"><svg><use href="#pline"/></svg></button>
          <button aria-label="Rectangle"><svg><use href="#rect"/></svg><i class="caret"></i></button>
          <button aria-label="Hatch"><svg><use href="#hatch"/></svg><i class="caret"></i></button>
        </div>
        <h2>Draw<i class="caret"></i></h2>
      </div>
      <div class="panel">
        <div class="panel-body cmds modify">
          <button aria-label="Move"><svg><use href="#move"/></svg></button>
          <button><svg><use href="#copy"/></svg>Copy</button>
          <button aria-label="Stretch"><svg><use href="#stretch"/></svg></button>
          <button aria-label="Rotate"><svg><use href="#rotate"/></svg></button>
          <button aria-label="Mirror"><svg><use href="#mirror"/></svg></button>
          <button aria-label="Scale"><svg><use href="#scale"/></svg></button>
          <button aria-label="Trim"><svg><use href="#trim"/></svg><i class="caret"></i></button>
          <button aria-label="Fillet"><svg><use href="#fillet"/></svg><i class="caret"></i></button>
          <button aria-label="Array"><svg><use href="#array"/></svg><i class="caret"></i></button>
          <button aria-label="Erase"><svg><use href="#erase"/></svg></button>
          <button aria-label="Explode"><svg><use href="#explode"/></svg></button>
          <button aria-label="Offset"><svg><use href="#offset"/></svg></button>
        </div>
        <h2>Modify<i class="caret"></i></h2>
      </div>
      <div class="panel">
        <div class="panel-body layers">
          <button class="big"><svg><use href="#layerprops"/></svg>Layer<br>Properties</button>
          <div class="layer-tools">
            <label class="layer-combo"><svg><use href="#bulb"/></svg><svg><use href="#sun"/></svg><svg><use href="#unlock"/></svg><span class="swatch"></span><select aria-label="Layer"><option>bm</option></select><i class="caret"></i></label>
            <div class="layer-icons">
              <button aria-label="Off"><svg><use href="#l-off"/></svg></button>
              <button aria-label="Isolate"><svg><use href="#l-iso"/></svg></button>
              <button aria-label="Freeze"><svg><use href="#l-frz"/></svg></button>
              <button aria-label="Lock"><svg><use href="#l-lock"/></svg></button>
              <button aria-label="Make current"><svg><use href="#l-cur"/></svg></button>
              <button aria-label="Turn all on"><svg><use href="#l-on"/></svg></button>
              <button aria-label="Unisolate"><svg><use href="#l-iso"/></svg></button>
              <button aria-label="Thaw"><svg><use href="#l-thaw"/></svg></button>
              <button aria-label="Unlock"><svg><use href="#l-unlock"/></svg></button>
              <button aria-label="Match"><svg><use href="#l-match"/></svg></button>
            </div>
          </div>
        </div>
        <h2>Layers<i class="caret"></i></h2>
      </div>
      <div class="panel">
        <div class="panel-body clip">
          <button class="big" aria-label="Paste"><svg><use href="#paste"/></svg></button>
          <div class="clip-side">
            <button aria-label="Cut"><svg><use href="#cut"/></svg><i class="caret"></i></button>
            <button aria-label="Copy clip"><svg><use href="#copyclip"/></svg></button>
          </div>
        </div>
      </div>
    </section>

    <nav class="doc-tabs" aria-label="Drawings">
      <button class="burger" aria-label="Drawing list"><svg><use href="#menu"/></svg></button>
      <i class="slash"></i>
      <button>Start</button>
      <button class="active">Kelleher_Traverse*<svg><use href="#close"/></svg></button>
      <button class="add" aria-label="New drawing"><svg><use href="#plus"/></svg></button>
      <i class="slash"></i>
    </nav>

    <div class="workarea">
      <aside class="toolspace">
        <div class="ts-main">
          <h2><i class="grip"></i>TOOLSPACE</h2>
          <div class="ts-tools">
            <button aria-label="Show tree"><svg><use href="#ts-tree"/></svg></button>
            <button aria-label="Preview"><svg><use href="#ts-pane"/></svg></button>
            <button aria-label="Help"><svg><use href="#help"/></svg></button>
          </div>
          <label class="ts-view"><select aria-label="Settings view"><option>Active Drawing Settings View</option></select><i class="caret"></i></label>
          <div class="tree-box">
            <ul class="tree">
              <li class="root"><button aria-label="Collapse">−</button><svg><use href="#t-doc"/></svg><span>Kelleher_Traverse</span></li>
              <li><button aria-label="Expand">+</button><svg><use href="#t-general"/></svg>General</li>
              <li><button aria-label="Expand">+</button><svg><use href="#t-point"/></svg>Point</li>
              <li><button aria-label="Expand">+</button><svg><use href="#t-surface"/></svg>Surface</li>
              <li><button aria-label="Expand">+</button><svg><use href="#t-parcel"/></svg>Parcel</li>
              <li><button aria-label="Expand">+</button><svg><use href="#t-grading"/></svg>Grading</li>
              <li><button aria-label="Expand">+</button><svg class="dark"><use href="#align"/></svg>Alignment</li>
              <li><button aria-label="Expand">+</button><svg><use href="#t-profile"/></svg>Profile</li>
              <li><button aria-label="Expand">+</button><svg><use href="#t-profview"/></svg>Profile View</li>
              <li><button aria-label="Expand">+</button><svg><use href="#t-super"/></svg>Superelevation View</li>
              <li><button aria-label="Expand">+</button><svg><use href="#t-super"/></svg>Cant View</li>
              <li><button aria-label="Expand">+</button><svg><use href="#t-sample"/></svg>Sample Line</li>
              <li><button aria-label="Expand">+</button><svg><use href="#t-section"/></svg>Section</li>
              <li><button aria-label="Expand">+</button><svg><use href="#t-secview"/></svg>Section View</li>
              <li><button aria-label="Expand">+</button><svg><use href="#t-mass"/></svg>Mass Haul Line</li>
              <li><button aria-label="Expand">+</button><svg><use href="#t-massview"/></svg>Mass Haul View</li>
              <li><button aria-label="Expand">+</button><svg><use href="#t-catch"/></svg>Catchment</li>
              <li><button aria-label="Expand">+</button><svg><use href="#t-net"/></svg>Pipe Network</li>
              <li><button aria-label="Expand">+</button><svg><use href="#t-pipe"/></svg>Pipe</li>
              <li><button aria-label="Expand">+</button><svg><use href="#t-struct"/></svg>Structure</li>
              <li><button aria-label="Expand">+</button><svg><use href="#t-net"/></svg>Pressure Network</li>
              <li><button aria-label="Expand">+</button><svg><use href="#t-ppipe"/></svg>Pressure Pipe</li>
              <li><button aria-label="Expand">+</button><svg><use href="#t-fit"/></svg>Fitting</li>
              <li><button aria-label="Expand">+</button><svg><use href="#t-app"/></svg>Appurtenance</li>
              <li><button aria-label="Expand">+</button><svg><use href="#t-bridge"/></svg>Bridge</li>
              <li><button aria-label="Expand">+</button><svg><use href="#t-rail"/></svg>Rail</li>
              <li><button aria-label="Expand">+</button><svg><use href="#t-turn"/></svg>Rail Turnout</li>
              <li><button aria-label="Expand">+</button><svg><use href="#t-corr"/></svg>Corridor</li>
              <li><button aria-label="Expand">+</button><svg><use href="#t-inter"/></svg>Intersection</li>
              <li><button aria-label="Expand">+</button><svg><use href="#t-asm"/></svg>Assembly</li>
            </ul>
            <div class="scroll"><i></i></div>
          </div>
          <div class="preview"></div>
        </div>
        <nav class="side-tabs" aria-label="Toolspace tabs">
          <button>Prospector</button><button class="active">Settings</button><button>Survey</button><button>Toolbox</button>
        </nav>
      </aside>

      <section class="canvas">
        <div class="vp-label">[−][Top][2D Wireframe]</div>
        <svg class="drawing" viewBox="0 0 865 558" preserveAspectRatio="xMinYMin meet">
          <path d="M250 278L594 223" stroke="#1d69b8"/>
          <text x="243" y="274">CC Spire</text>
          <text x="588" y="216" class="bm">BM</text>
          <path d="M386 103h32M424 103h32M421 68v32M421 106v32" stroke="#a5abad"/>
          <rect x="419" y="101" width="4" height="4" fill="none" stroke="#d7dbdc"/>
          <path d="M12.500 509v33M16 545.500h33M10.500 542.500h6v6h-6z" stroke="#c6cacc" fill="none"/>
          <path d="M14 496l5 5 5-5M19 501v5M52 535l9 9M61 535l-9 9" stroke="#c6cacc" fill="none"/>
        </svg>
        <div class="cube">
          <svg viewBox="0 0 96 96"><circle cx="48" cy="48" r="40" fill="none" stroke="#40474d" stroke-width="8"/></svg>
          <b class="n">N</b><b class="w">W</b><b class="e">E</b><b class="s">S</b>
          <button>TOP</button>
        </div>
        <button class="ucs">Unnamed</button>
        <div class="navbar">
          <svg viewBox="0 0 24 154"><g fill="none" stroke="#4a5054" stroke-width="1"><circle cx="12" cy="22" r="7"/><rect x="8" y="18" width="8" height="8"/><path d="M4 13v14h4M7 60c-3-6-2-8 1-5l1-9 2 7 1-9 2 8 2-7 1 8 2-3c0 6-1 11-5 13z"/><circle cx="14" cy="77" r="4"/><path d="M17 80l4 5M5 70l5 5M5 84l5-5M20 67l-4 5M11 93v17M4 101h15M9 95l3-3 3 3M9 108l3 3 3-3M5 123h9v8H5zM14 123h6v8h-6zM4 131h12v10H4zM7 133l5 3-5 3z"/></g></svg>
        </div>
        <div class="command">
          <i class="grip"></i>
          <button aria-label="Close"><svg><use href="#close"/></svg></button>
          <button aria-label="Customize"><svg><use href="#wrench"/></svg></button>
          <label class="cmdline"><svg><use href="#prompt"/></svg><i class="caret"></i><input type="text" aria-label="Command" placeholder="Type a command"><i class="caret up"></i></label>
        </div>
      </section>

      <div class="toolbar" role="toolbar" aria-label="Points and geodesy">
        <button aria-label="Angle"><svg><use href="#r-tri"/></svg></button>
        <button aria-label="Station"><svg><use href="#r-person"/></svg></button>
        <button aria-label="Offset"><svg><use href="#r-flag"/></svg></button>
        <button aria-label="Grid"><svg><use href="#r-table"/></svg></button>
        <button aria-label="Zone"><svg><use href="#r-globe"/></svg></button>
        <button aria-label="Latitude longitude"><svg><use href="#r-globe2"/></svg></button>
        <button aria-label="Point number"><svg><use href="#r-ndot"/></svg></button>
        <button aria-label="Point name"><svg><use href="#r-ntext"/></svg></button>
        <button aria-label="Point object"><svg><use href="#r-narrow"/></svg></button>
        <button aria-label="Zoom to point"><svg><use href="#r-nzoom"/></svg></button>
        <button aria-label="Side shot"><svg><use href="#r-edit"/></svg></button>
        <button aria-label="Station offset"><svg><use href="#r-turn"/></svg></button>
        <hr>
        <button aria-label="Select point"><svg><use href="#r-star"/></svg></button>
        <hr>
        <button aria-label="Curve"><svg><use href="#r-curve"/></svg></button>
        <button aria-label="Curve by point"><svg><use href="#r-blob"/></svg></button>
        <button aria-label="Curve node"><svg><use href="#r-nturn"/></svg></button>
        <hr>
        <button aria-label="Deflection"><svg><use href="#r-l1"/></svg></button>
        <button aria-label="Bearing"><svg><use href="#r-l2"/></svg></button>
        <button aria-label="Azimuth"><svg><use href="#r-l3"/></svg></button>
        <button aria-label="Slope"><svg><use href="#r-l4"/></svg></button>
        <button aria-label="Circle inquiry"><svg><use href="#r-cir"/></svg></button>
        <button aria-label="Distance inquiry"><svg><use href="#r-dia"/></svg></button>
        <button aria-label="Curve calculator"><svg><use href="#r-calc"/></svg></button>
        <hr class="dim">
        <button aria-label="Filter"><svg><use href="#r-star"/></svg></button>
        <button aria-label="Table"><svg><use href="#r-table"/></svg></button>
        <button aria-label="Point settings"><svg><use href="#r-ndot"/></svg></button>
      </div>
    </div>

    <footer class="bottom">
      <nav class="doc-tabs layouts" aria-label="Layouts">
        <button class="burger" aria-label="Layout list"><svg><use href="#menu"/></svg></button>
        <button class="active">Model</button>
        <button>Layout1</button><i class="slash"></i>
        <button>Layout2</button><i class="slash"></i>
        <button class="add" aria-label="New layout"><svg><use href="#plus"/></svg></button><i class="slash"></i>
      </nav>
      <div class="status">
        <button class="coords">2673056.8832, 507257.2807, 0.0000</button>
        <button class="model">MODEL</button>
        <div class="group modes">
          <button aria-label="Grid"><svg><use href="#s-grid"/></svg></button>
          <button aria-label="Snap"><svg><use href="#s-snap"/></svg></button><i class="caret"></i>
        </div>
        <div class="group modes">
          <button aria-label="Ortho"><svg><use href="#s-ortho"/></svg></button>
          <button aria-label="Polar"><svg><use href="#s-polar"/></svg></button><i class="caret"></i>
          <button aria-label="Isodraft"><svg><use href="#s-iso"/></svg></button><i class="caret"></i>
          <button class="on" aria-label="Tracking"><svg><use href="#s-track"/></svg></button>
          <button class="on" aria-label="Object snap"><svg><use href="#s-osnap"/></svg></button><i class="caret"></i>
        </div>
        <div class="group">
          <button class="on" aria-label="Annotation visibility"><svg><use href="#s-anno2"/></svg></button>
          <button aria-label="Auto scale"><svg><use href="#s-anno3"/></svg></button>
          <button class="scale"><svg><use href="#s-anno"/></svg>1' = 40'<i class="caret"></i></button>
        </div>
        <div class="group">
          <button aria-label="Workspace"><svg><use href="#gear"/></svg></button><i class="caret"></i>
          <button aria-label="Monitor"><svg><use href="#plus"/></svg></button>
          <button aria-label="Units"><svg><use href="#s-shapes"/></svg></button>
        </div>
        <div class="group">
          <button class="elev"><svg><use href="#s-layers"/></svg>3.5000</button>
        </div>
        <div class="group">
          <button aria-label="Isolate objects"><svg><use href="#s-leaf"/></svg></button><i class="caret"></i>
          <button class="on" aria-label="Graphics"><svg><use href="#s-dia"/></svg></button>
          <button aria-label="Clean screen"><svg><use href="#s-full"/></svg></button>
          <button aria-label="Customize"><svg><use href="#menu"/></svg></button>
        </div>
      </div>
    </footer>
  </main>

  <div class="tooltip" role="tooltip">
    <strong>Layer</strong>
    <p>Provides a choice of layers and layer settings defined in the drawing to make current</p>
    <div class="tip-cmd"><svg><use href="#layercmd"/></svg>LAYER</div>
    <strong>Press F1 for more help</strong>
  </div>
  <time class="clock" datetime="2025-09-29T09:06:19">2025-09-29 09:06:19</time>
</div>
</body>
</html>
```
FILE: styles.css
```css
:root {
  --frame: #3c4554;
  --dark: #222933;
  --text: #dfe3e8;
  --edge: #1b6f98;
}
* { box-sizing: border-box; }
body { margin: 0; background: #000; color: var(--text); font: 8px/12px "Open Sans", "Noto Sans", sans-serif; }
h1, h2, p, ul { margin: 0; padding: 0; font: inherit; }
ul { list-style: none; }
button, input, select { margin: 0; padding: 0; border: 0; border-radius: 0; background: none; color: inherit; font: inherit; white-space: nowrap; }
select { appearance: none; flex: 1; min-width: 0; outline: 0; }
svg { display: block; width: 12px; height: 12px; flex: none; overflow: visible; }
.sprite { position: absolute; width: 0; height: 0; }

.caret { flex: none; width: 0; height: 0; border: 3px solid transparent; border-top-color: var(--text); border-bottom-width: 0; }
.caret.dim { border-top-color: #6b727c; }
.caret.right { border-width: 3px 0 3px 4px; border-color: transparent transparent transparent var(--text); }
.caret.up { border-width: 0 3px 3px; border-color: transparent transparent #444; }
.grip { width: 4px; height: 12px; background: repeating-linear-gradient(#8b929b 0 1px, transparent 1px 2px); }

.desktop { position: relative; min-height: 100vh; margin: 0 48px 0 47px; padding-right: 113px; background: #333132; display: flex; }
.backdrop { position: absolute; right: 0; top: 61px; width: 120px; height: 97px; background: #003b75; }
.app { position: relative; flex: 1; min-width: 0; display: flex; flex-direction: column; background: var(--frame); border: 1px solid var(--edge); border-radius: 5px; overflow: hidden; }

/* Title bar */
.titlebar { display: flex; align-items: center; height: 22px; padding-left: 8px; background: var(--dark); }
.titlebar button { display: flex; align-items: center; justify-content: center; }
.logo { width: 17px; height: 17px; margin-right: 4px; background: linear-gradient(90deg, #e25aae 2px, #a3187c 2px); color: #fff; font-weight: 700; font-size: 11px; }
.quick { display: flex; margin-left: 6px; }
.quick button { width: 17px; }
.quick .split { width: 26px; gap: 4px; }
.titlebar .caret:not(.right) { border-left-width: 2px; border-right-width: 2px; }
.workspace { display: flex; align-items: center; gap: 2px; width: 128px; height: 15px; margin-left: 1px; padding: 0 2px 0 1px; background: #3a414e; }
.more { margin: 0 8px 0 6px; }
.share { gap: 4px; color: #9fd2f2; }
.share svg { width: 10px; height: 10px; }
.title { display: flex; flex: 1; gap: 10px; margin-left: 18px; white-space: nowrap; color: #eceff2; }
.search { width: 128px; height: 14px; margin-left: 4px; padding: 0 2px; background: #454b59; font-style: italic; outline: 0; }
.search::placeholder, .cmdline input::placeholder { color: #a9aeb6; opacity: 1; }
.find { width: 18px; }
.find svg { width: 11px; height: 11px; }
.account { gap: 3px; margin-left: 3px; }
.account .caret { margin-left: 29px; }
.services { display: flex; margin-left: 5px; }
.services button { width: 17px; }
.services .split { width: 27px; gap: 5px; }
.services .helpbtn { width: 34px; padding-left: 6px; border-left: 1px solid #414853; }
.wincontrols { display: flex; margin-left: 42px; }
.wincontrols button { width: 33px; }

/* Ribbon tabs */
.ribbon-tabs { display: flex; align-items: flex-end; gap: 1px; height: 17px; padding-left: 4px; background: var(--dark); }
.ribbon-tabs button { height: 14px; padding: 0 7px; color: #b5bac2; }
.ribbon-tabs .active { background: var(--frame); color: #fff; }
.ribbon-tabs .geo { background: #176487; border: 1px solid #2a86b0; color: #e6f2f8; line-height: 10px; }
.ribbon-tabs .collapse { display: flex; align-items: center; gap: 3px; margin-left: 7px; }
.pill { width: 11px; height: 6px; border-radius: 1px; background: #eef0f2; }
.collapse .caret { border-left-width: 2px; border-right-width: 2px; }

/* Ribbon */
.ribbon { display: grid; grid-template-columns: 82px 38px 58px 93px 232px 96px 85px 120px 199px 1fr; height: 72px; margin: 0 2px; background: #3b4453; }
.ribbon > .panel { display: flex; flex-direction: column; border-right: 1px solid #2e3643; overflow: hidden; }
.ribbon > .panel:last-child { border: 0; }
.panel h2 { display: flex; align-items: center; justify-content: center; gap: 5px; height: 14px; white-space: nowrap; }
.panel-body { height: 57px; padding-top: 4px; }
.ribbon button { display: flex; align-items: center; text-align: center; }
.ribbon button .caret { border-left-width: 2px; border-right-width: 2px; border-top-width: 2px; }
.ribbon .big { flex-direction: column; line-height: 11px; display: flex; }
.big svg { width: 22px; height: 22px; margin: 2px 0 4px; }
.center { display: flex; justify-content: center; }
.palettes { display: flex; gap: 1px; padding-left: 2px; }
.palettes .big { width: 43px; height: 52px; border: 1px solid #6fa5cd; background: #3b5674; }
.palettes .big svg { margin-top: 1px; }
.mini { display: grid; grid-template-columns: 17px 17px; grid-auto-rows: 17px; }
.ribbon .mini button { justify-content: center; border: 1px solid transparent; }
.ribbon .mini .on { border-color: #5b96bf; background: #3a536e; }
.mini svg { width: 11px; height: 11px; }
.cmds { display: grid; grid-template-rows: repeat(3, 17px); grid-auto-flow: column; justify-content: start; }
.cmds button { gap: 4px; }
.ground { padding-left: 17px; }
.design { grid-template-columns: 76px 71px 80px; padding-left: 4px; }
.views { padding-left: 9px; }
.draw { grid-template-columns: 26px 28px 28px; padding-left: 5px; }
.modify { grid-template-columns: 46px 22px 29px 12px; padding-left: 4px; }
.layers { display: flex; gap: 3px; padding-left: 3px; }
.layer-tools { flex: 1; }
.layer-combo { display: flex; align-items: center; gap: 3px; height: 16px; width: 150px; margin-top: 1px; padding: 0 2px; border: 1px solid #596375; background: #3a4355; }
.layer-combo svg { width: 11px; height: 11px; }
.layer-combo .caret { border-width: 3px 3px 0; }
.swatch { width: 11px; height: 11px; background: #1687ff; border: 1px solid #c7d4e4; }
.layer-icons { display: grid; grid-template-columns: repeat(5, 17px); grid-auto-rows: 17px; }
.ribbon .layer-icons button { justify-content: center; }
.clip { display: flex; align-items: flex-start; gap: 11px; padding-left: 8px; }
.clip .big svg { width: 20px; height: 24px; }
.clip-side button { gap: 5px; height: 17px; }

/* Document and layout tabs */
.doc-tabs { display: flex; align-items: center; height: 20px; padding: 0 12px; background: var(--dark); border-bottom: 1px solid #454d5a; }
.doc-tabs button { display: flex; align-items: center; gap: 6px; padding: 0 8px; color: #cfd3d9; }
.doc-tabs .burger, .doc-tabs .add { padding: 0; color: #fff; }
.doc-tabs .active { height: 17px; padding: 0 8px; background: var(--frame); color: #fff; font-weight: 700; clip-path: polygon(5px 0, 100% 0, calc(100% - 5px) 100%, 0 100%); }
.doc-tabs .active svg { width: 9px; height: 9px; }
.doc-tabs .add { margin: 0 10px 0 5px; }
.slash { width: 1px; height: 10px; background: #565e6a; transform: skewX(-20deg); }
.burger + .slash { margin-left: 9px; }

/* Work area */
.workarea { display: flex; flex: 1; min-height: 0; }
.toolspace { display: flex; width: 180px; padding: 3px 0 4px 1px; }
.ts-main { flex: 1; min-width: 0; display: flex; flex-direction: column; }
.ts-main h2 { display: flex; align-items: center; gap: 5px; height: 14px; padding-left: 4px; background: #333c4a; }
.ts-main h2 .grip { width: 2px; height: 7px; }
.ts-tools { display: flex; justify-content: flex-end; gap: 8px; padding: 6px 4px; }
.ts-view { display: flex; align-items: center; height: 15px; padding: 0 4px 0 3px; background: #465066; white-space: nowrap; }
.tree-box { display: flex; flex: 1; min-height: 0; margin: 4px 0 0 1px; background: #fff; overflow: hidden; color: #1a1a1a; }
.tree { position: relative; flex: 1; height: calc(100% + 8px); display: grid; grid-template-rows: repeat(30, minmax(0, 1fr)); }
.tree::before { content: ""; position: absolute; left: 23px; top: 16px; bottom: 0; border-left: 1px dotted #999; }
.tree li { position: relative; display: flex; align-items: center; padding-left: 20px; white-space: nowrap; }
.tree li svg { margin: 0 5px 0 4px; }
.tree .root { padding-left: 6px; font-weight: 700; }
.tree .root span { flex: 1; padding-left: 2px; margin-left: -2px; background: #9b9b9b; color: #111; }
.tree button { width: 7px; height: 7px; border: 1px solid #8a8a8a; background: #fff; font: 7px/5px "Liberation Sans", sans-serif; text-align: center; }
.dark { color: #555; }
.scroll { width: 14px; padding: 13px 6px 100px; }
.scroll i { display: block; width: 2px; height: 100%; background: #77797c; }
.preview { height: 67px; margin-top: 6px; background: #414757; border: 1px solid #828a93; }
.side-tabs { display: flex; flex-direction: column; width: 16px; margin-right: 3px; padding-top: 16px; }
.side-tabs button { width: 15px; height: 87px; padding: 0; writing-mode: vertical-rl; transform: rotate(180deg); background: #293140; color: #b3b8c0; line-height: 15px; }
.side-tabs .active { background: var(--frame); color: #e9ecef; }

.canvas { position: relative; flex: 1; min-width: 0; margin-top: 2px; background: #222930; border-radius: 3px; overflow: hidden; }
.vp-label { padding: 4px 1px; color: #c7cbce; }
.drawing { position: absolute; left: 0; top: 0; width: 865px; height: 558px; }
.drawing text { fill: #1f77d0; font: 4px "Liberation Mono", monospace; }
.drawing .bm { font-size: 5px; font-weight: 700; }
.cube { position: absolute; right: 11px; top: 29px; width: 96px; height: 96px; }
.cube svg { width: 96px; height: 96px; }
.cube b { position: absolute; color: #b7babd; font: 700 14px/14px "Liberation Sans", sans-serif; }
.cube .n { left: 43px; top: 1px; }
.cube .s { left: 43px; bottom: 0; }
.cube .w { left: 1px; top: 41px; }
.cube .e { right: 2px; top: 41px; }
.cube button { position: absolute; left: 30px; top: 29px; width: 37px; height: 37px; background: #b9bbbe; border: 1px solid #cdd0d2; color: #4d5256; font: 700 8px/12px "Open Sans", sans-serif; }
.ucs { position: absolute; right: 35px; top: 140px; width: 48px; height: 12px; padding-left: 3px; border-radius: 3px; background: #8d9296; color: #4a4f53; text-align: left; line-height: 10px; }
.navbar { position: absolute; right: 2px; top: 170px; width: 23px; height: 154px; border-radius: 3px; background: #5e6367; }
.navbar svg { width: 23px; height: 154px; }
.command { position: absolute; left: 179px; right: 176px; bottom: 1px; height: 18px; display: flex; align-items: center; gap: 4px; }
.command > button svg { width: 10px; height: 10px; }
.command > button + button { margin: 0 0 0 3px; }
.cmdline { flex: 1; display: flex; align-items: center; gap: 3px; height: 18px; padding: 0 2px; background: #babfc0; }
.cmdline .caret:not(.up) { border-width: 3px 2px 0; border-top-color: #444; }
.cmdline input { flex: 1; min-width: 0; outline: 0; color: #333; font: italic 9px/12px "Liberation Mono", monospace; }
.cmdline input::placeholder { color: #5c6163; }

.toolbar { display: flex; flex-direction: column; align-items: center; width: 25px; padding-top: 24px; background: #333b49; border: solid var(--frame); border-width: 0 3px 0 3px; }
.toolbar button { height: 16px; display: flex; align-items: center; }
.toolbar hr { width: 14px; height: 2px; margin: 1px 0; border: 0; background: #f0f2f4; }
.toolbar hr.dim { margin: 2px 0; background: #7b828c; }

/* Bottom bar */
.bottom { display: flex; justify-content: space-between; align-items: center; height: 25px; padding-bottom: 2px; background: var(--dark); border-top: 1px solid #454d5a; }
.layouts { height: 22px; border: 0; }
.layouts .active { height: 18px; padding: 0 10px 0 12px; margin: 0 0 0 7px; }
.layouts .add { margin: 0 10px; }
.status { display: flex; align-items: center; gap: 4px; padding-right: 2px; }
.status button { display: flex; align-items: center; justify-content: center; height: 18px; min-width: 18px; }
.status .coords { padding: 0 7px; background: #343c49; }
.status .model { padding: 0 2px; background: #343c49; }
.group { display: flex; align-items: center; background: #303845; }
.group > .caret { margin: 0 3px; }
.modes > .caret { margin: 0 3px 0 2px; }
.group .on { background: #5f8fc4; }
.scale { gap: 5px; padding-left: 3px; }
.status .elev { gap: 5px; padding: 0 3px; font-size: 9px; }

/* Overlays */
.tooltip { position: absolute; right: 6px; top: 68px; width: 238px; padding: 5px 6px 6px; border-radius: 1px; background: #f1f1f1; color: #4a4a4a; line-height: 11px; box-shadow: 0 0 3px #0006; }
.tooltip strong { display: block; line-height: 12px; color: #333; }
.tooltip p { margin: 4px 0 5px; }
.tip-cmd { display: flex; align-items: center; gap: 3px; margin-bottom: 5px; padding-top: 3px; border-top: 1px solid #bbb; color: #333; font-weight: 700; }
.clock { position: absolute; right: -5px; top: 682px; padding: 0 2px 0 7px; background: #0b0e11; color: #fff; font: 14px/22px "Liberation Mono", monospace; white-space: nowrap; }
```
